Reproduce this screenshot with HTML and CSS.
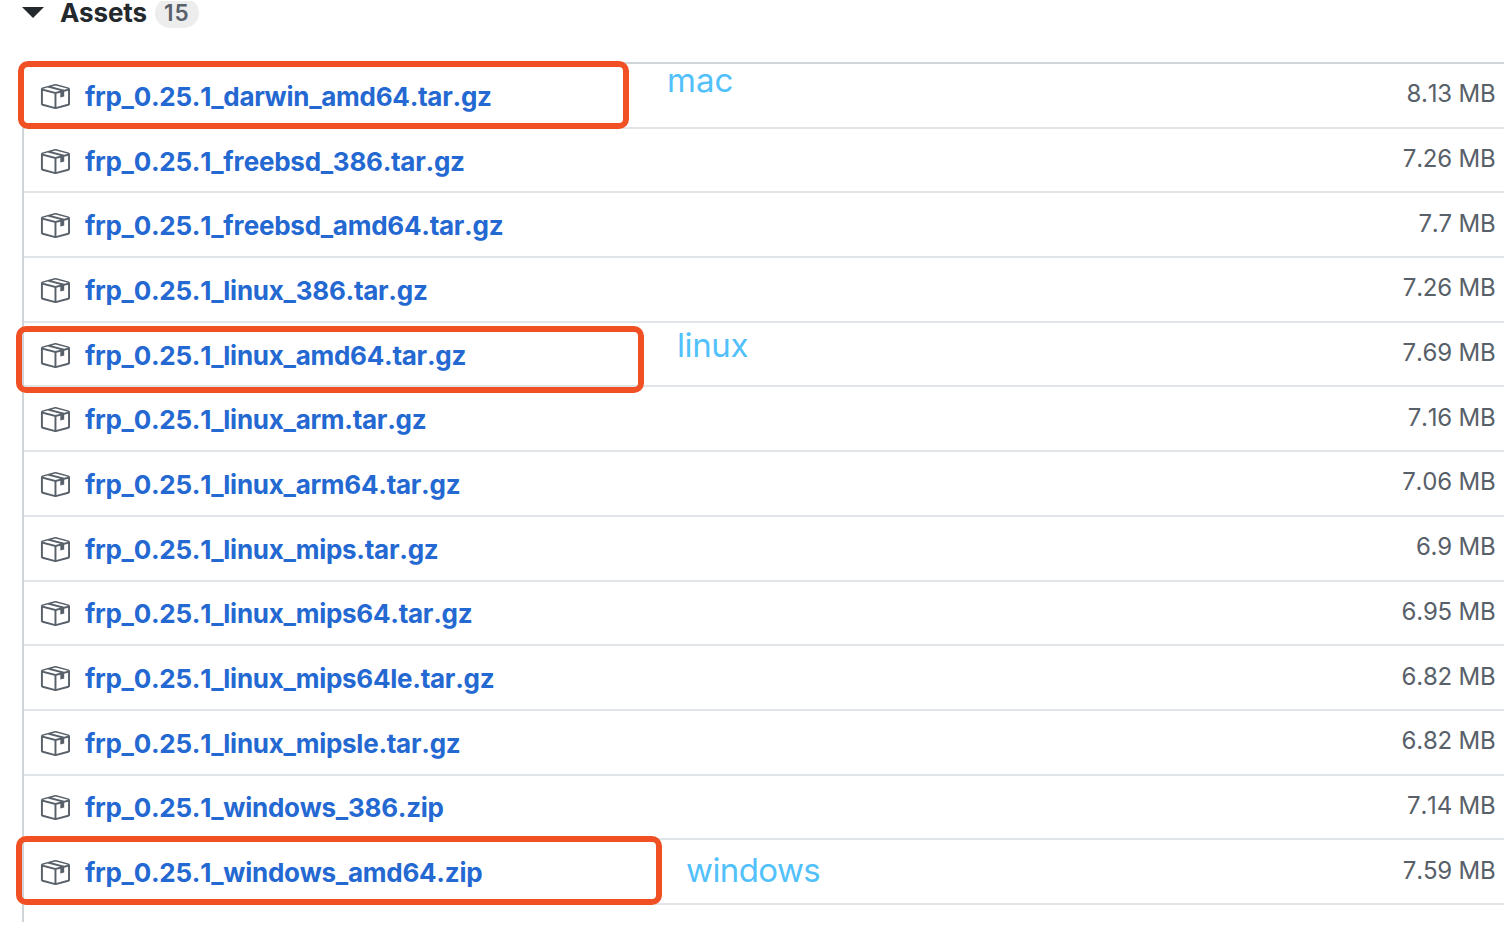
FILE: index.html
```html
<!DOCTYPE html>
<html lang="en">
<head>
<meta charset="utf-8">
<title>frp release assets</title>
<link rel="stylesheet" href="styles.css">
</head>

<body>
<svg class="sprite" width="0" height="0">
<symbol id="package" viewBox="0 0 16 16">
<path fill-rule="evenodd" d="M1 4.27v7.47c0 .45.3.84.75.97l6.5 1.73c.16.05.34.05.5 0l6.5-1.73c.45-.13.75-.52.75-.97V4.27c0-.45-.3-.84-.75-.97l-6.5-1.74a1.4 1.4 0 0 0-.5 0L1.75 3.3c-.45.13-.75.52-.75.97zm7 9.09l-6-1.59V5l6 1.61v6.75zM2 4l2.5-.67L11 5.06l-2.5.67L2 4zm13 7.77l-6 1.59V6.61l2-.55V8.5l2-.53V5.53L15 5v6.77zm-2-7.24L6.5 2.8l2-.53L15 4l-2 .53z"/>
</symbol>
</svg>

<div class="release">
<div class="summary">
<span class="caret"></span>
<span class="title">Assets</span>
<span class="counter">15</span>
</div>

<div class="assets">
<div class="asset"><svg class="icon"><use href="#package"/></svg><a class="name">frp_0.25.1_darwin_amd64.tar.gz</a><span class="size">8.13 MB</span></div>
<div class="asset"><svg class="icon"><use href="#package"/></svg><a class="name">frp_0.25.1_freebsd_386.tar.gz</a><span class="size">7.26 MB</span></div>
<div class="asset"><svg class="icon"><use href="#package"/></svg><a class="name">frp_0.25.1_freebsd_amd64.tar.gz</a><span class="size">7.7 MB</span></div>
<div class="asset"><svg class="icon"><use href="#package"/></svg><a class="name">frp_0.25.1_linux_386.tar.gz</a><span class="size">7.26 MB</span></div>
<div class="asset"><svg class="icon"><use href="#package"/></svg><a class="name">frp_0.25.1_linux_amd64.tar.gz</a><span class="size">7.69 MB</span></div>
<div class="asset"><svg class="icon"><use href="#package"/></svg><a class="name">frp_0.25.1_linux_arm.tar.gz</a><span class="size">7.16 MB</span></div>
<div class="asset"><svg class="icon"><use href="#package"/></svg><a class="name">frp_0.25.1_linux_arm64.tar.gz</a><span class="size">7.06 MB</span></div>
<div class="asset"><svg class="icon"><use href="#package"/></svg><a class="name">frp_0.25.1_linux_mips.tar.gz</a><span class="size">6.9 MB</span></div>
<div class="asset"><svg class="icon"><use href="#package"/></svg><a class="name">frp_0.25.1_linux_mips64.tar.gz</a><span class="size">6.95 MB</span></div>
<div class="asset"><svg class="icon"><use href="#package"/></svg><a class="name">frp_0.25.1_linux_mips64le.tar.gz</a><span class="size">6.82 MB</span></div>
<div class="asset"><svg class="icon"><use href="#package"/></svg><a class="name">frp_0.25.1_linux_mipsle.tar.gz</a><span class="size">6.82 MB</span></div>
<div class="asset"><svg class="icon"><use href="#package"/></svg><a class="name">frp_0.25.1_windows_386.zip</a><span class="size">7.14 MB</span></div>
<div class="asset"><svg class="icon"><use href="#package"/></svg><a class="name">frp_0.25.1_windows_amd64.zip</a><span class="size">7.59 MB</span></div>
<div class="asset"></div>
</div>

<!-- marks drawn over the list -->
<div class="mark mark-mac"></div>
<div class="note note-mac">mac</div>
<div class="mark mark-linux"></div>
<div class="note note-linux">linux</div>
<div class="mark mark-windows"></div>
<div class="note note-windows">windows</div>
</div>
</body>
</html>
```

FILE: styles.css
```css
body {margin:0; padding-top:1px; background-color:#fff; font-family:Inter, "Liberation Sans", sans-serif; color:#24292e;}
.sprite {position:absolute;}

.release {position:relative; height:921px; overflow:hidden;}

.summary {display:flex; align-items:center; height:24px; margin-bottom:37px; padding-left:22px;}
.caret {margin-top:-1px; border:solid transparent; border-width:11px 11px 0; border-top-color:#24292e;}
.title {margin-left:16px; font-size:26px; font-weight:650; line-height:26px; letter-spacing:-0.1px;}
.counter {height:30px; margin:-1px 0 0 8px; padding:0 9px; border-radius:15px; background-color:#ededee; color:#586069; font-size:22.5px; font-weight:600; line-height:30px; letter-spacing:0.9px;}

.assets {margin-left:22px; border-left:solid #d1d5da 2px; border-top:solid #d1d5da 2px;}
.asset {display:flex; align-items:center; box-sizing:border-box; height:64.7px; padding:2px 8.5px 0 14.5px; border-bottom:solid #e1e4e8 2px;}
.icon {width:31px; height:31px; fill:#586069;}
.name {margin:1px 0 0 15.5px; color:#2468d2; font-size:26px; font-weight:650; line-height:34px; letter-spacing:-0.26px; font-kerning:none;}
.size {margin:-4px 0 0 auto; color:#586069; font-size:24px; line-height:34px; letter-spacing:-0.2px; font-kerning:none;}

.mark {position:absolute; box-sizing:border-box; border:solid #f05023 6px; border-radius:10px;}
.mark-mac {left:18.4px; top:60px; width:611px; height:67.5px;}
.mark-linux {left:16.4px; top:325px; width:627.5px; height:67px;}
.mark-windows {left:16.4px; top:835px; width:646px; height:68.5px;}

.note {position:absolute; color:#52c1fb; font-size:33px; line-height:40px;}
.note-mac {left:667px; top:59px;}
.note-linux {left:677px; top:324px; letter-spacing:-0.4px;}
.note-windows {left:686px; top:849px; letter-spacing:-0.6px;}
```
